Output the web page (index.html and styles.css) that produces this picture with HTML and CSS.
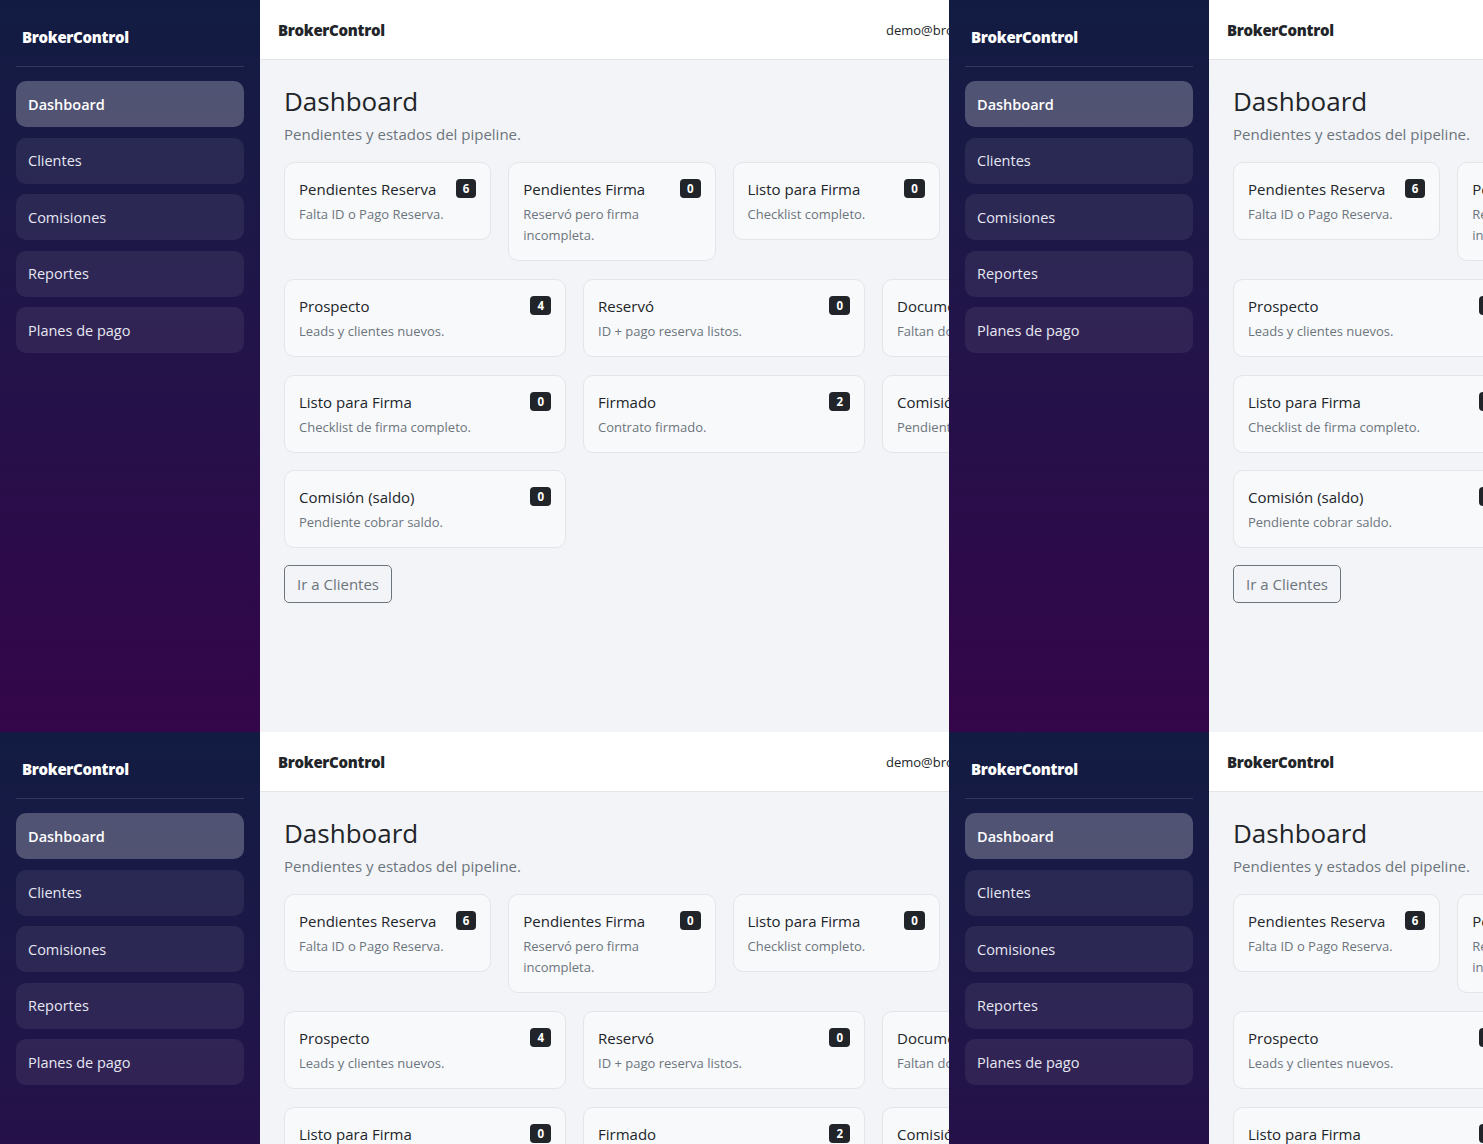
FILE: index.html
```html
<!DOCTYPE html>
<html lang="es">
<head>
    <meta charset="UTF-8">
    <meta name="viewport" content="width=device-width, initial-scale=1.0">
    <title>BrokerControl</title>
    <link rel="stylesheet" href="styles.css">
</head>
<body>
    <div class="wall">
        <div class="tile">
            <div class="app">
                <aside class="sidebar">
                    <div class="side-brand">BrokerControl</div>
                    <hr class="side-divider">
                    <nav class="side-nav">
                        <a href="#" class="active">Dashboard</a>
                        <a href="#">Clientes</a>
                        <a href="#">Comisiones</a>
                        <a href="#">Reportes</a>
                        <a href="#">Planes de pago</a>
                    </nav>
                </aside>
                <div class="main">
                    <header class="topbar">
                        <span class="top-brand">BrokerControl</span>
                        <span class="top-user">demo@brokercontrol.cl</span>
                    </header>
                    <section class="content">
                        <h1>Dashboard</h1>
                        <p class="lead">Pendientes y estados del pipeline.</p>

                        <div class="cards cards-4">
                            <div class="card">
                                <div class="card-head"><span>Pendientes Reserva</span><span class="badge">6</span></div>
                                <p>Falta ID o Pago Reserva.</p>
                            </div>
                            <div class="card">
                                <div class="card-head"><span>Pendientes Firma</span><span class="badge">0</span></div>
                                <p>Reservó pero firma incompleta.</p>
                            </div>
                            <div class="card">
                                <div class="card-head"><span>Listo para Firma</span><span class="badge">0</span></div>
                                <p>Checklist completo.</p>
                            </div>
                        </div>

                        <div class="cards cards-3">
                            <div class="card">
                                <div class="card-head"><span>Prospecto</span><span class="badge">4</span></div>
                                <p>Leads y clientes nuevos.</p>
                            </div>
                            <div class="card">
                                <div class="card-head"><span>Reservó</span><span class="badge">0</span></div>
                                <p>ID + pago reserva listos.</p>
                            </div>
                            <div class="card">
                                <div class="card-head"><span>Documentos</span><span class="badge">0</span></div>
                                <p>Faltan documentos.</p>
                            </div>
                            <div class="card">
                                <div class="card-head"><span>Listo para Firma</span><span class="badge">0</span></div>
                                <p>Checklist de firma completo.</p>
                            </div>
                            <div class="card">
                                <div class="card-head"><span>Firmado</span><span class="badge">2</span></div>
                                <p>Contrato firmado.</p>
                            </div>
                            <div class="card">
                                <div class="card-head"><span>Comisión (pie)</span><span class="badge">0</span></div>
                                <p>Pendiente cobrar pie.</p>
                            </div>
                            <div class="card">
                                <div class="card-head"><span>Comisión (saldo)</span><span class="badge">0</span></div>
                                <p>Pendiente cobrar saldo.</p>
                            </div>
                        </div>

                        <a href="#" class="btn-outline">Ir a Clientes</a>
                    </section>
                </div>
            </div>
        </div>
    </div>

    <script src="script.js"></script>
</body>
</html>
```

FILE: styles.css
```css
html, body {
    overflow: hidden;
}
body {
    margin: 0;
    font-family: "Open Sans", "Noto Sans", sans-serif;
    color: #212529;
}
.wall {
    display: grid;
    grid-template-columns: repeat(2, 949px);
    grid-auto-rows: 732px;
    width: 1483px;
    height: 1144px;
    overflow: hidden;
}
.tile {
    overflow: hidden;
}
.app {
    display: flex;
    width: 1188px;
    height: 732px;
}

/* sidebar */
.sidebar {
    flex: none;
    width: 260px;
    box-sizing: border-box;
    padding: 22px 16px;
    background: linear-gradient(180deg, #121c42 0%, #1e1748 35%, #2c0b4a 75%, #34064a 100%);
    color: #e6e7f2;
}
.side-brand {
    padding: 0 6px;
    font-size: 15px;
    font-weight: 800;
    line-height: 30px;
    color: #fff;
    letter-spacing: -0.3px;
}
.side-divider {
    border: 0;
    border-top: 1px solid rgba(255, 255, 255, 0.13);
    margin: 14px 0;
}
.side-nav {
    display: flex;
    flex-direction: column;
    gap: 10.5px;
}
.side-nav a {
    display: flex;
    align-items: center;
    height: 46px;
    padding: 0 12px;
    border-radius: 10px;
    background: rgba(255, 255, 255, 0.07);
    color: #e6e7f2;
    text-decoration: none;
    font-size: 14.5px;
}
.side-nav a.active {
    background: rgba(255, 255, 255, 0.25);
    color: #fff;
    font-weight: 600;
}

/* main column */
.main {
    flex: 1;
    background: #f3f4f7;
}
.topbar {
    display: grid;
    grid-template-columns: 608px auto;
    align-items: center;
    height: 60px;
    box-sizing: border-box;
    padding: 0 18px;
    background: #fff;
    border-bottom: 1px solid #e3e5e9;
}
.top-brand {
    font-size: 15px;
    font-weight: 800;
    letter-spacing: -0.3px;
}
.top-user {
    font-size: 13px;
    white-space: nowrap;
}
.content {
    padding: 24px;
}
h1 {
    margin: 0 0 4px;
    font-size: 26px;
    font-weight: 500;
    line-height: 34px;
}
.lead {
    margin: 0 0 16px;
    font-size: 15px;
    line-height: 24px;
    color: #6c757d;
}

/* cards */
.cards {
    display: grid;
    gap: 17.5px 17px;
    align-items: start;
    width: 880px;
}
.cards-4 {
    grid-template-columns: repeat(4, 1fr);
    margin-bottom: 18px;
}
.cards-3 {
    grid-template-columns: repeat(3, 1fr);
    margin-bottom: 17px;
}
.card {
    padding: 14px 14px 14px;
    background: #f8f9fb;
    border: 1px solid #e3e5e9;
    border-radius: 10px;
}
.card-head {
    display: flex;
    justify-content: space-between;
    align-items: flex-start;
    gap: 10px;
    font-size: 15px;
    line-height: 24px;
    margin-bottom: 3px;
}
.card p {
    margin: 0;
    font-size: 13px;
    line-height: 21px;
    color: #6c757d;
}
.badge {
    margin-top: 2px;
    padding: 0 7px;
    line-height: 19px;
    border-radius: 4px;
    background: #212529;
    color: #fff;
    font-size: 11.5px;
    font-weight: 700;
}
.btn-outline {
    display: inline-block;
    padding: 6px 12px;
    font-size: 15px;
    line-height: 24px;
    color: #6c757d;
    border: 1px solid #6c757d;
    border-radius: 5px;
    text-decoration: none;
}
```

FILE: script.js
```js
// the wall shows the same dashboard four times
const wall = document.querySelector('.wall');
const tile = wall.querySelector('.tile');

for (let i = 0; i < 3; i++) {
    wall.appendChild(tile.cloneNode(true));
}
```
